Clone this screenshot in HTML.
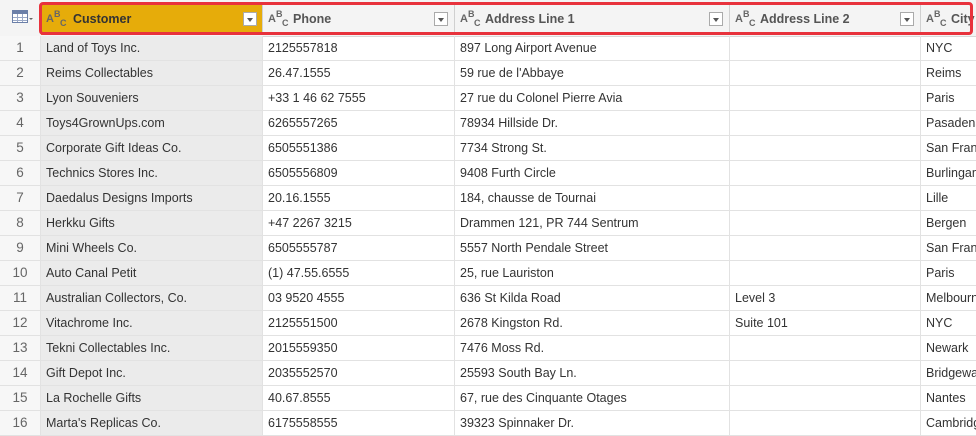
<!DOCTYPE html>
<html><head><meta charset="utf-8"><style>
body{margin:0;width:976px;height:426px;overflow:hidden;background:#fff;font-family:"Liberation Sans",sans-serif;font-size:12.5px;color:#333;position:relative}
.hdr{position:absolute;top:0;left:0;width:976px;height:36px;background:#f4f4f4;border-bottom:1px solid #d8d8d8}
.hc{position:absolute;top:4px;height:31px;line-height:30px;font-weight:bold;color:#555;border-right:1px solid #d0d0d0;box-sizing:border-box}
.abc{position:absolute;left:5px;top:0;font-size:11px;color:#666;font-weight:bold}
.abc b{position:absolute;font-size:9px}
.dd{position:absolute;top:8px;width:14px;height:14px;border:1px solid #aaa;background:#fff;box-sizing:border-box}
.dd:after{content:"";position:absolute;left:3px;top:5px;border-left:3px solid transparent;border-right:3px solid transparent;border-top:4px solid #555}
.red{position:absolute;left:39px;top:2px;width:934px;height:33px;border:3px solid #e8323c;border-radius:4px;box-sizing:border-box}
.row{position:absolute;left:0;width:976px;height:25px;border-bottom:1px solid #e2e2e2;box-sizing:border-box}
.c{position:absolute;top:0;height:24px;line-height:24px;padding-left:5px;box-sizing:border-box;white-space:nowrap;overflow:hidden;border-right:1px solid #e2e2e2}
.i{left:0;width:41px;text-align:center;padding:0;color:#666;background:#f7f7f7;font-size:13.5px}
.cu{left:41px;width:222px;background:#ebebeb}
.ph{left:263px;width:192px}
.a1{left:455px;width:275px}
.a2{left:730px;width:191px}
.ci{left:921px;width:60px}
</style></head><body>
<div class="hdr">
<svg style="position:absolute;left:12px;top:10px" width="22" height="14"><rect x="0.5" y="0.5" width="15" height="12" fill="#fff" stroke="#6b7fa8"/><rect x="1" y="1" width="14" height="3" fill="#6b7fa8"/><path d="M1 7.5H15M1 10.5H15M5.5 4V12M10.5 4V12" stroke="#9aa8c6"/><path d="M17 8l2 2 2-2z" fill="#666"/></svg>
<div class="hc" style="left:41px;width:222px;background:#e6ac0a;color:#333"><span class="abc">A<b style="top:-5px;left:8px">B</b><b style="top:4px;left:14px">C</b></span><span style="margin-left:32px">Customer</span><div class="dd" style="left:202px"></div></div>
<div class="hc" style="left:263px;width:192px"><span class="abc">A<b style="top:-5px;left:8px">B</b><b style="top:4px;left:14px">C</b></span><span style="margin-left:30px">Phone</span><div class="dd" style="left:171px"></div></div>
<div class="hc" style="left:455px;width:275px"><span class="abc">A<b style="top:-5px;left:8px">B</b><b style="top:4px;left:14px">C</b></span><span style="margin-left:30px">Address Line 1</span><div class="dd" style="left:254px"></div></div>
<div class="hc" style="left:730px;width:191px"><span class="abc">A<b style="top:-5px;left:8px">B</b><b style="top:4px;left:14px">C</b></span><span style="margin-left:30px">Address Line 2</span><div class="dd" style="left:170px"></div></div>
<div class="hc" style="left:921px;width:60px;border:0"><span class="abc">A<b style="top:-5px;left:8px">B</b><b style="top:4px;left:14px">C</b></span><span style="margin-left:30px">City</span></div>
</div>
<div class="red"></div>
<div class="row" style="top:36px"><div class="c i">1</div><div class="c cu">Land of Toys Inc.</div><div class="c ph">2125557818</div><div class="c a1">897 Long Airport Avenue</div><div class="c a2"></div><div class="c ci">NYC</div></div>
<div class="row" style="top:61px"><div class="c i">2</div><div class="c cu">Reims Collectables</div><div class="c ph">26.47.1555</div><div class="c a1">59 rue de l'Abbaye</div><div class="c a2"></div><div class="c ci">Reims</div></div>
<div class="row" style="top:86px"><div class="c i">3</div><div class="c cu">Lyon Souveniers</div><div class="c ph">+33 1 46 62 7555</div><div class="c a1">27 rue du Colonel Pierre Avia</div><div class="c a2"></div><div class="c ci">Paris</div></div>
<div class="row" style="top:111px"><div class="c i">4</div><div class="c cu">Toys4GrownUps.com</div><div class="c ph">6265557265</div><div class="c a1">78934 Hillside Dr.</div><div class="c a2"></div><div class="c ci">Pasadena</div></div>
<div class="row" style="top:136px"><div class="c i">5</div><div class="c cu">Corporate Gift Ideas Co.</div><div class="c ph">6505551386</div><div class="c a1">7734 Strong St.</div><div class="c a2"></div><div class="c ci">San Francisco</div></div>
<div class="row" style="top:161px"><div class="c i">6</div><div class="c cu">Technics Stores Inc.</div><div class="c ph">6505556809</div><div class="c a1">9408 Furth Circle</div><div class="c a2"></div><div class="c ci">Burlingame</div></div>
<div class="row" style="top:186px"><div class="c i">7</div><div class="c cu">Daedalus Designs Imports</div><div class="c ph">20.16.1555</div><div class="c a1">184, chausse de Tournai</div><div class="c a2"></div><div class="c ci">Lille</div></div>
<div class="row" style="top:211px"><div class="c i">8</div><div class="c cu">Herkku Gifts</div><div class="c ph">+47 2267 3215</div><div class="c a1">Drammen 121, PR 744 Sentrum</div><div class="c a2"></div><div class="c ci">Bergen</div></div>
<div class="row" style="top:236px"><div class="c i">9</div><div class="c cu">Mini Wheels Co.</div><div class="c ph">6505555787</div><div class="c a1">5557 North Pendale Street</div><div class="c a2"></div><div class="c ci">San Francisco</div></div>
<div class="row" style="top:261px"><div class="c i">10</div><div class="c cu">Auto Canal Petit</div><div class="c ph">(1) 47.55.6555</div><div class="c a1">25, rue Lauriston</div><div class="c a2"></div><div class="c ci">Paris</div></div>
<div class="row" style="top:286px"><div class="c i">11</div><div class="c cu">Australian Collectors, Co.</div><div class="c ph">03 9520 4555</div><div class="c a1">636 St Kilda Road</div><div class="c a2">Level 3</div><div class="c ci">Melbourne</div></div>
<div class="row" style="top:311px"><div class="c i">12</div><div class="c cu">Vitachrome Inc.</div><div class="c ph">2125551500</div><div class="c a1">2678 Kingston Rd.</div><div class="c a2">Suite 101</div><div class="c ci">NYC</div></div>
<div class="row" style="top:336px"><div class="c i">13</div><div class="c cu">Tekni Collectables Inc.</div><div class="c ph">2015559350</div><div class="c a1">7476 Moss Rd.</div><div class="c a2"></div><div class="c ci">Newark</div></div>
<div class="row" style="top:361px"><div class="c i">14</div><div class="c cu">Gift Depot Inc.</div><div class="c ph">2035552570</div><div class="c a1">25593 South Bay Ln.</div><div class="c a2"></div><div class="c ci">Bridgewater</div></div>
<div class="row" style="top:386px"><div class="c i">15</div><div class="c cu">La Rochelle Gifts</div><div class="c ph">40.67.8555</div><div class="c a1">67, rue des Cinquante Otages</div><div class="c a2"></div><div class="c ci">Nantes</div></div>
<div class="row" style="top:411px"><div class="c i">16</div><div class="c cu">Marta's Replicas Co.</div><div class="c ph">6175558555</div><div class="c a1">39323 Spinnaker Dr.</div><div class="c a2"></div><div class="c ci">Cambridge</div></div>
</body></html>
